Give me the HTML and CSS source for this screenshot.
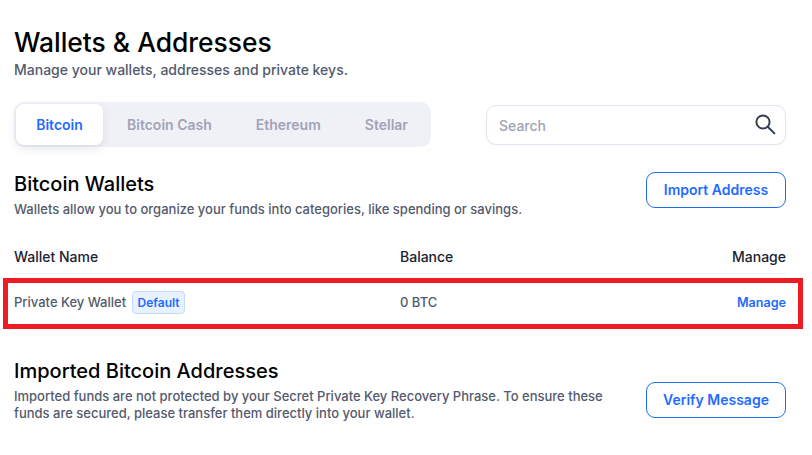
FILE: index.html
```html
<!DOCTYPE html>
<html lang="en">
<head>
    <meta charset="UTF-8">
    <title>Wallets &amp; Addresses</title>
    <link rel="stylesheet" href="styles.css">
</head>
<body>
    <div class="page">
        <h1>Wallets &amp; Addresses</h1>
        <p class="subtitle">Manage your wallets, addresses and private keys.</p>

        <div class="toolbar">
            <div class="tabs">
                <div class="tab active">Bitcoin</div>
                <div class="tab">Bitcoin Cash</div>
                <div class="tab">Ethereum</div>
                <div class="tab">Stellar</div>
            </div>
            <div class="search">
                <span>Search</span>
                <svg width="22" height="22" viewBox="0 0 22 22" fill="none" stroke="#353f52" stroke-width="2">
                    <circle cx="9" cy="9" r="6.6"/>
                    <path d="M14 14l6.4 6.4" stroke-linecap="round"/>
                </svg>
            </div>
        </div>

        <div class="section-head">
            <div>
                <h2>Bitcoin Wallets</h2>
                <p class="desc">Wallets allow you to organize your funds into categories, like spending or savings.</p>
            </div>
            <button class="button">Import Address</button>
        </div>

        <div class="table-head">
            <div class="col-name">Wallet Name</div>
            <div class="col-balance">Balance</div>
            <div class="col-manage">Manage</div>
        </div>

        <!-- Highlighted row -->
        <div class="wallet-row">
            <div class="col-name">
                Private Key Wallet
                <span class="badge">Default</span>
            </div>
            <div class="col-balance">0 BTC</div>
            <div class="col-manage"><a class="link">Manage</a></div>
        </div>

        <div class="section-head imported">
            <div class="imported-text">
                <h2>Imported Bitcoin Addresses</h2>
                <p class="desc">Imported funds are not protected by your Secret Private Key Recovery Phrase. To ensure these funds are secured, please transfer them directly into your wallet.</p>
            </div>
            <button class="button verify">Verify Message</button>
        </div>
    </div>
</body>
</html>
```

FILE: styles.css
```css
/* Global Styles */
html, body {
    margin: 0;
    padding: 0;
    background: #fff;
    overflow: hidden;
}

body {
    font-family: 'Inter', 'Liberation Sans', Arial, sans-serif;
    color: #000;
}

.page {
    height: 455px;
    box-sizing: border-box;
    padding: 25px 26px 0 14px;
}

h1 {
    margin: 0;
    height: 34px;
    font-size: 26.4px;
    line-height: 34px;
    font-weight: 500;
}

.subtitle {
    margin: 1px 0 0;
    font-size: 14px;
    line-height: 20px;
    font-weight: 500;
    color: #535a6d;
}

/* Tabs and search */
.toolbar {
    margin-top: 22px;
    display: flex;
    justify-content: space-between;
    align-items: center;
}

.tabs {
    display: flex;
    width: 417px;
    height: 45px;
    box-sizing: border-box;
    padding: 2px;
    background: #f0f1f7;
    border-radius: 10px;
}

.tab {
    flex: none;
    padding: 0 22px;
    font-size: 14px;
    line-height: 41px;
    font-weight: 600;
    color: #a0a3b8;
    white-space: nowrap;
}

.tab.active {
    width: 87px;
    box-sizing: border-box;
    padding: 0;
    margin-right: 2px;
    text-align: center;
    background: #fff;
    color: #1f6bff;
    border-radius: 8px;
    box-shadow: 0 4px 10px rgba(30, 40, 90, 0.1);
}

.search {
    width: 300px;
    height: 40px;
    box-sizing: border-box;
    padding: 2px 9px 0 12px;
    display: flex;
    justify-content: space-between;
    align-items: center;
    border: 1px solid #e0e2ee;
    border-radius: 10px;
    font-size: 14px;
    font-weight: 500;
    color: #a0a3b4;
}

.search svg {
    margin-top: -4px;
}

/* Section headers */
.section-head {
    margin-top: 25px;
    display: flex;
    justify-content: space-between;
    align-items: flex-start;
}

h2 {
    margin: 0;
    font-size: 20px;
    line-height: 24px;
    font-weight: 500;
}

.desc {
    margin: 5px 0 0;
    font-size: 13px;
    line-height: 17px;
    font-weight: 500;
    color: #535a6d;
}

.button {
    width: 140px;
    height: 36px;
    padding: 0 0 1px;
    background: #fff;
    border: 1px solid #1f6fe8;
    border-radius: 9px;
    font-family: inherit;
    font-size: 14px;
    font-weight: 600;
    color: #1f6bff;
}

/* Wallet table */
.table-head {
    margin-top: 24px;
    height: 29px;
    padding-bottom: 2px;
    display: flex;
    align-items: center;
    border-bottom: 1px solid #f0f0f3;
    font-size: 14px;
    font-weight: 500;
    color: #1a2233;
}

.col-name {
    width: 386px;
    display: flex;
    align-items: center;
    gap: 6px;
}

.col-balance {
    flex: 1;
}

.col-manage {
    text-align: right;
}

.wallet-row {
    margin: 4px -17px 0 -11px;
    height: 51px;
    box-sizing: border-box;
    padding: 0 12px 3px 6px;
    display: flex;
    align-items: center;
    border: 5px solid #ed1c24;
    font-size: 13px;
    font-weight: 500;
    color: #535a6d;
}

.badge {
    width: 53px;
    height: 23px;
    line-height: 21px;
    text-align: center;
    box-sizing: border-box;
    background: #e8f1fe;
    border: 1px solid #c3dafc;
    border-radius: 4px;
    font-size: 12px;
    font-weight: 600;
    color: #1f6bff;
}

.link {
    font-weight: 600;
    font-size: 12.6px;
    color: #1f6bff;
}

.imported {
    margin-top: 30px;
}

.imported-text {
    width: 600px;
}

.verify {
    margin-top: 23px;
}
```
